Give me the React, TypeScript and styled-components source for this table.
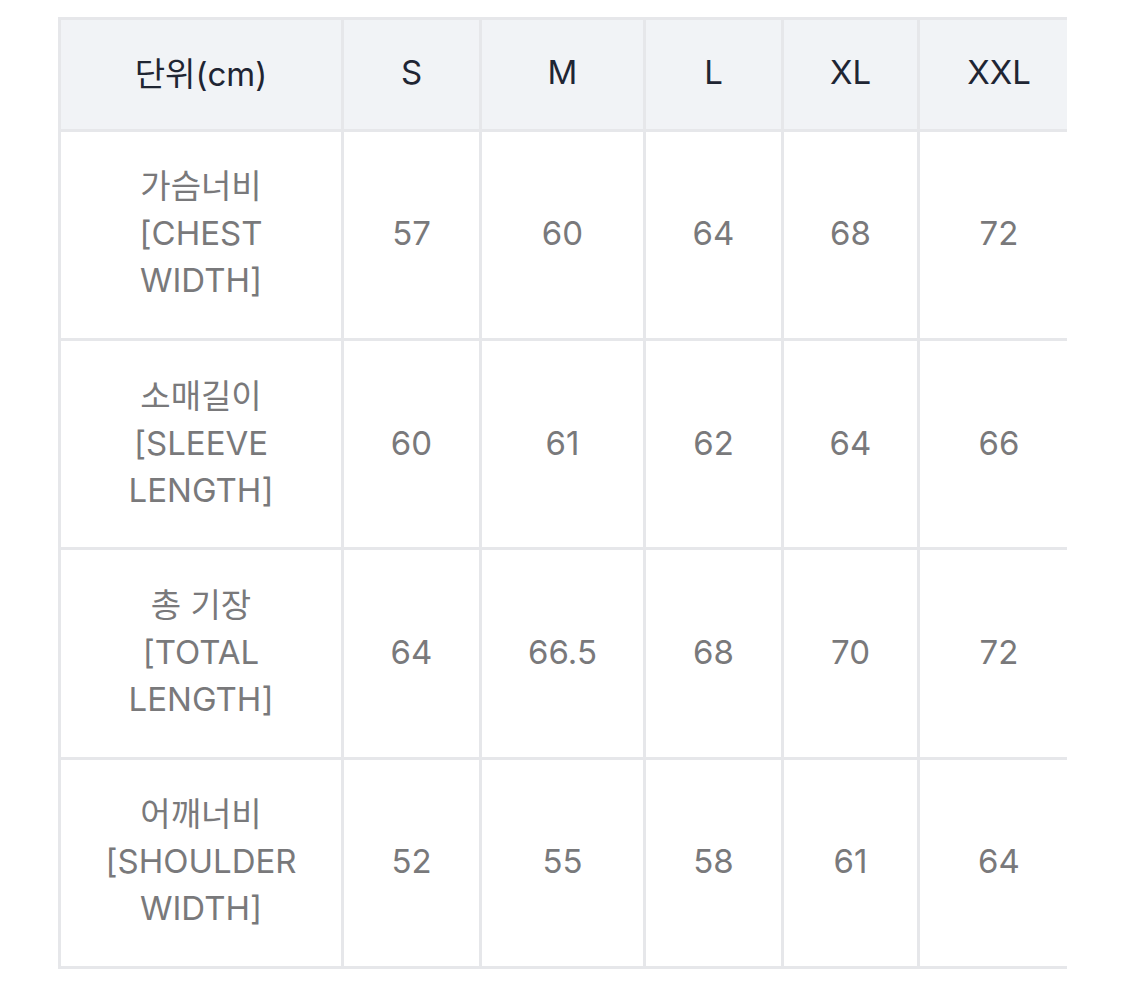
import React from "react";
import styled, { createGlobalStyle } from "styled-components";

const Global = createGlobalStyle`
  html, body { margin: 0; padding: 0; background: #ffffff; }
  body { font-family: Inter, "Noto Sans CJK KR", sans-serif; }
`;

const Page = styled.div`
  width: 1125px;
  height: 983px;
  padding: 17px 0 0 58px;
  box-sizing: border-box;
  background: #fff;
`;

const Clip = styled.div`
  width: 1009px;
  overflow: hidden;
`;

const Table = styled.table`
  border-collapse: collapse;
  table-layout: fixed;
  width: 1020px;
  border: 3px solid #e6e7ea;
`;

const Head = styled.th`
  height: 104.5px;
  padding: 0 0 4px;
  background: #f1f3f6;
  border: 3px solid #e6e7ea;
  color: #1f2533;
  font-weight: 400;
  font-size: 33px;
  text-align: center;
  vertical-align: middle;
`;

const Cell = styled.td`
  height: 204.4px;
  padding: 0 0 2px;
  border: 3px solid #e6e7ea;
  color: #79797b;
  font-size: 33px;
  line-height: 47px;
  text-align: center;
  vertical-align: middle;
`;

const widths = [283, 138, 164, 138, 136, 161];
const sizes = ["S", "M", "L", "XL", "XXL"];

const rows: { label: string[]; values: string[] }[] = [
  { label: ["가슴너비", "[CHEST", "WIDTH]"], values: ["57", "60", "64", "68", "72"] },
  { label: ["소매길이", "[SLEEVE", "LENGTH]"], values: ["60", "61", "62", "64", "66"] },
  { label: ["총 기장", "[TOTAL", "LENGTH]"], values: ["64", "66.5", "68", "70", "72"] },
  { label: ["어깨너비", "[SHOULDER", "WIDTH]"], values: ["52", "55", "58", "61", "64"] },
];

export default function App() {
  return (
    <>
      <Global />
      <Page>
        <Clip>
          <Table>
            <colgroup>
              {widths.map((w, i) => (
                <col key={i} style={{ width: w }} />
              ))}
            </colgroup>
            <thead>
              <tr>
                <Head>단위(cm)</Head>
                {sizes.map((s) => (
                  <Head key={s}>{s}</Head>
                ))}
              </tr>
            </thead>
            <tbody>
              {rows.map((r) => (
                <tr key={r.label[0]}>
                  <Cell>
                    {r.label.map((l, i) => (
                      <React.Fragment key={i}>
                        {i > 0 && <br />}
                        {l}
                      </React.Fragment>
                    ))}
                  </Cell>
                  {r.values.map((v, i) => (
                    <Cell key={i}>{v}</Cell>
                  ))}
                </tr>
              ))}
            </tbody>
          </Table>
        </Clip>
      </Page>
    </>
  );
}
